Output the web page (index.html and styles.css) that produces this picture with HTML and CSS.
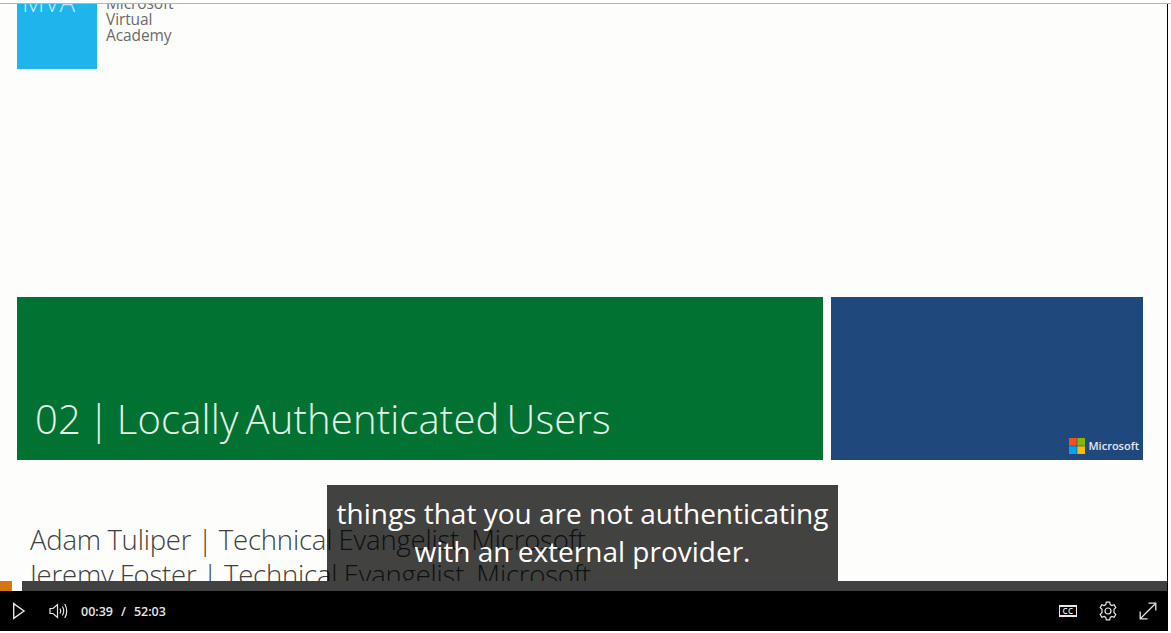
FILE: index.html
```html
<!DOCTYPE html>
<html lang="en">
<head>
    <meta charset="UTF-8">
    <meta name="viewport" content="width=device-width, initial-scale=1.0">
    <title>02 | Locally Authenticated Users</title>
    <link rel="stylesheet" href="styles.css">
</head>
<body>
    <div class="top-rule"></div>
    <div class="player">
        <div class="stage">
            <div class="slide">
                <div class="brand">
                    <div class="mva-tile"><span class="mva-text">MVA</span></div>
                    <div class="mva-name">Microsoft<br>Virtual<br>Academy</div>
                </div>
                <div class="banner">
                    <div class="banner-title"><h1>02 | Locally Authenticated Users</h1></div>
                    <div class="banner-logo">
                        <svg class="ms-flag" width="16" height="16" viewBox="0 0 16 16">
                            <rect width="7.7" height="7.7" fill="#f25022"/>
                            <rect x="8.3" width="7.7" height="7.7" fill="#7fba00"/>
                            <rect y="8.3" width="7.7" height="7.7" fill="#00a4ef"/>
                            <rect x="8.3" y="8.3" width="7.7" height="7.7" fill="#ffb900"/>
                        </svg>
                        <span>Microsoft</span>
                    </div>
                </div>
                <div class="presenters">
                    <p>Adam Tuliper | Technical Evangelist, Microsoft</p>
                    <p>Jeremy Foster | Technical Evangelist, Microsoft</p>
                </div>
            </div>
            <div class="caption">things that you are not authenticating<br>with an external provider.</div>
        </div>
        <div class="progress">
            <div class="progress-played"></div>
            <div class="progress-buffered"></div>
        </div>
        <div class="controls">
            <svg class="icon icon-play" width="14" height="18" viewBox="0 0 14 18" fill="none" stroke="#e6e6e6" stroke-width="1.4">
                <path d="M1.7 1.6 L12 9 L1.7 16.4 Z"/>
            </svg>
            <svg class="icon icon-volume" width="20" height="18" viewBox="0 0 20 18" fill="none" stroke="#e6e6e6" stroke-width="1.2">
                <path d="M1 6.5 H4 L8.5 2.5 V15.5 L4 11.5 H1 Z"/>
                <path d="M11 6.5 Q12.6 9 11 11.5"/>
                <path d="M13.4 4.5 Q16 9 13.4 13.5"/>
                <path d="M15.8 2 Q19.6 9 15.8 16"/>
            </svg>
            <div class="time">
                <span>00:39</span>
                <span class="time-sep">/</span>
                <span>52:03</span>
            </div>
            <div class="controls-right">
                <div class="icon-cc">CC</div>
                <svg class="icon icon-gear" width="20" height="20" viewBox="0 0 20 20" fill="none" stroke="#e6e6e6" stroke-width="1.2">
                    <path d="M8.3 1.2 H11.7 L12.2 3.6 L13.8 4.5 L16.1 3.7 L17.8 6.6 L16 8.2 V10 V11.8 L17.8 13.4 L16.1 16.3 L13.8 15.5 L12.2 16.4 L11.7 18.8 H8.3 L7.8 16.4 L6.2 15.5 L3.9 16.3 L2.2 13.4 L4 11.8 V8.2 L2.2 6.6 L3.9 3.7 L6.2 4.5 L7.8 3.6 Z"/>
                    <circle cx="10" cy="10" r="3"/>
                </svg>
                <svg class="icon icon-full" width="18" height="18" viewBox="0 0 18 18" fill="none" stroke="#e6e6e6" stroke-width="1.3">
                    <path d="M1.5 16.5 L16.5 1.5"/>
                    <path d="M9.5 1.2 H16.8 V8.5"/>
                    <path d="M1.2 9.5 V16.8 H8.5"/>
                </svg>
            </div>
        </div>
    </div>
</body>
</html>
```

FILE: styles.css
```css
html, body {
    margin: 0;
    padding: 0;
    height: 100%;
    background-color: #fff;
    overflow: hidden;
}
.top-rule {
    height: 1px;
    margin-top: 3px;
    background-color: #b4b4b4;
}
.player {
    width: 1168px;
    font-family: "Open Sans", Arial, sans-serif;
}
.stage {
    position: relative;
    height: 577px;
    overflow: hidden;
    border-right: 1px solid #000;
    background-color: #fdfdfb;
}
.slide {
    display: flex;
    flex-direction: column;
    padding-left: 17px;
    padding-right: 24px;
    font-weight: 300;
}
.brand {
    display: flex;
    height: 65px;
    overflow: hidden;
    color: #6a6a6a;
}
.mva-tile {
    width: 80px;
    height: 65px;
    background-color: #1fb5ec;
    color: #bfe9f9;
    overflow: hidden;
}
.mva-text {
    display: block;
    margin: -20px 0 0 5px;
    font-size: 26px;
    line-height: 36px;
}
.mva-name {
    margin: -9px 0 0 9px;
    font-size: 15.5px;
    line-height: 16px;
    font-weight: 400;
    letter-spacing: -0.1px;
}
.banner {
    display: flex;
    gap: 8px;
    height: 163px;
    margin-top: 228px;
}
.banner-title {
    display: flex;
    align-items: flex-end;
    width: 806px;
    background-color: #017232;
    color: #e4f1e8;
}
.banner-title h1 {
    margin: 0 0 15px 18px;
    font-size: 40px;
    line-height: 52px;
    font-weight: 300;
    word-spacing: -3.5px;
    letter-spacing: 0.15px;
}
.banner-logo {
    display: flex;
    flex: 1;
    align-items: flex-end;
    justify-content: flex-end;
    gap: 3px;
    padding: 0 4px 6px 0;
    background-color: #1f497d;
    color: #e4e9f0;
    font-size: 11px;
    font-weight: 600;
    line-height: 16px;
}
.presenters {
    margin: 62px 0 0 13px;
    color: #404040;
    font-size: 27.5px;
    line-height: 35px;
    word-spacing: -0.5px;
    letter-spacing: -0.2px;
}
.presenters p {
    margin: 0;
}
.caption {
    position: absolute;
    left: 327px;
    top: 481px;
    width: 511px;
    height: 96px;
    padding-top: 9px;
    box-sizing: border-box;
    background-color: rgba(0, 0, 0, 0.74);
    color: #fff;
    font-size: 28px;
    line-height: 38px;
    text-align: center;
    white-space: nowrap;
}
.progress {
    display: flex;
    height: 10px;
    border-right: 1px solid #000;
    background-color: #414141;
}
.progress-played {
    width: 12px;
    background-color: #d8750e;
}
.progress-buffered {
    width: 10px;
    background-color: #fff;
}
.controls {
    display: flex;
    align-items: center;
    height: 40px;
    background-color: #000;
    color: #e6e6e6;
}
.icon {
    display: block;
    flex: none;
}
.icon-play {
    margin-left: 12px;
}
.icon-volume {
    margin-left: 23px;
}
.time {
    display: flex;
    gap: 8px;
    margin-left: 12px;
    font-size: 12.5px;
    font-weight: 600;
}
.controls-right {
    display: flex;
    align-items: center;
    gap: 21px;
    margin-left: auto;
    margin-right: 11px;
}
.icon-cc {
    box-sizing: border-box;
    width: 18px;
    height: 12px;
    border: 1px solid #e6e6e6;
    border-top-width: 2px;
    border-bottom-width: 2px;
    font-size: 8px;
    line-height: 8px;
    font-weight: 600;
    text-align: center;
    letter-spacing: 0.5px;
}
```
